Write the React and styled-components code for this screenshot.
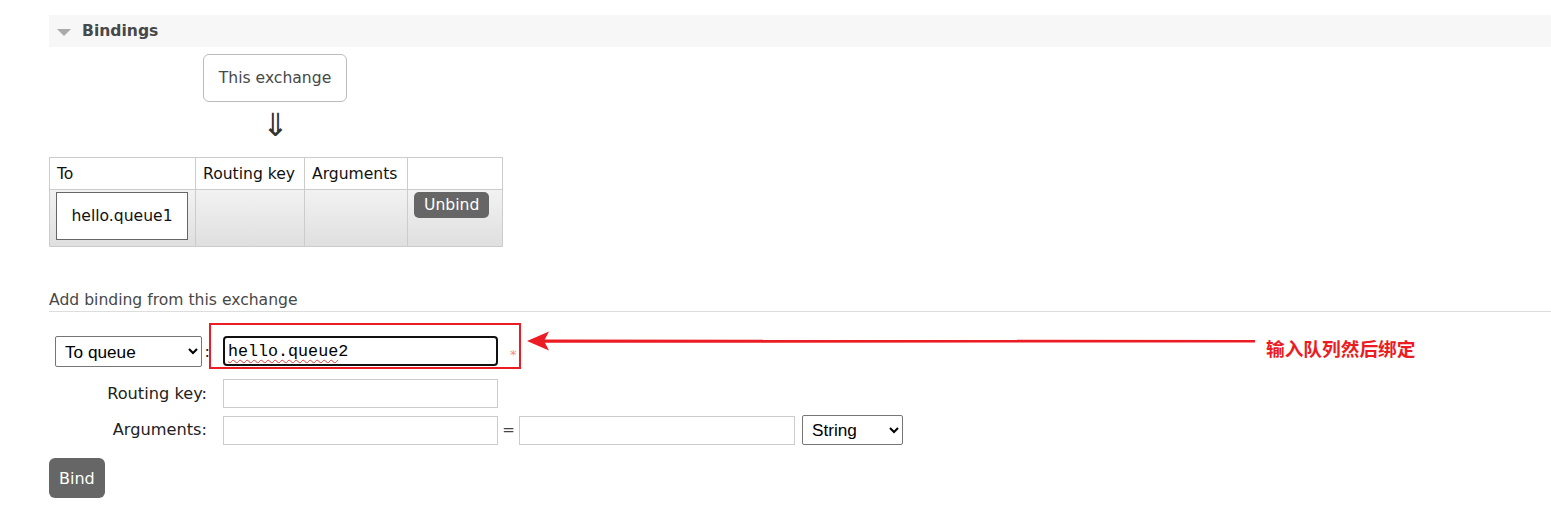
import React from "react";
import styled, { createGlobalStyle } from "styled-components";

const GlobalStyle = createGlobalStyle`
  body {
    margin: 0;
    background: #fff;
    font-family: "DejaVu Sans", Verdana, sans-serif;
    color: #484848;
  }
`;

const Page = styled.div`
  position: relative;
  padding: 15px 0 14px 49px;
`;

const SectionHeader = styled.div`
  height: 32px;
  background: #f7f7f7;
  display: flex;
  align-items: center;
  padding-left: 8px;
  gap: 11px;
`;

const Toggle = styled.span`
  width: 0;
  height: 0;
  border-left: 7px solid transparent;
  border-right: 7px solid transparent;
  border-top: 7px solid #aaa;
  margin-top: 2px;
`;

const HeaderTitle = styled.h2`
  margin: 0;
  font-size: 15.6px;
  font-weight: bold;
  color: #484848;
`;

const Flow = styled.div`
  width: 144px;
  margin-left: 154px;
  padding-top: 7px;
  display: flex;
  flex-direction: column;
  align-items: center;
`;

const ExchangeBox = styled.div`
  box-sizing: border-box;
  width: 144px;
  height: 48px;
  border: 1px solid #bbb;
  border-radius: 6px;
  display: flex;
  align-items: center;
  justify-content: center;
  font-size: 15.6px;
  color: #484848;
`;

const FlowArrow = styled.div`
  height: 55px;
  font-family: "Noto Sans CJK SC", "DejaVu Sans", sans-serif;
  font-weight: 300;
  font-size: 32px;
  line-height: 40px;
  color: #333;
`;

const Table = styled.table`
  border-collapse: collapse;
  table-layout: fixed;
  width: 453px;
  font-size: 15.6px;
  color: #111;

  th, td {
    border: 1px solid #ccc;
    text-align: left;
    vertical-align: top;
  }
  th {
    font-weight: normal;
    height: 31px;
    padding: 0 7px;
    vertical-align: middle;
    white-space: nowrap;
  }
  td {
    height: 54px;
    padding: 2px 6px 0;
  }
`;

const BodyRow = styled.tr`
  background: linear-gradient(#f2f2f2, #dfdfdf);
`;

const QueueLink = styled.div`
  box-sizing: border-box;
  width: 132px;
  height: 48px;
  border: 1px solid #666;
  background: #fff;
  display: flex;
  align-items: center;
  justify-content: center;
  color: #111;
`;

const Button = styled.button`
  border: none;
  background: #666;
  color: #fff;
  font-family: "DejaVu Sans", Verdana, sans-serif;
  font-size: ${(p) => (p.$large ? "16px" : "15.6px")};
  border-radius: ${(p) => (p.$large ? "6px" : "5px")};
  height: ${(p) => (p.$large ? "40px" : "26px")};
  padding: 0 10px;
  cursor: pointer;
`;

const SubHeading = styled.h3`
  margin: 42px 0 0;
  font-size: 15.6px;
  font-weight: normal;
  color: #484848;
  line-height: 22px;
  padding-bottom: 0;
  border-bottom: 1px solid #ddd;
`;

const Form = styled.div`
  padding-top: 24px;
  display: flex;
  flex-direction: column;
`;

const Row = styled.div`
  display: flex;
  align-items: ${(p) => (p.$top ? "flex-start" : "center")};
  margin-top: ${(p) => p.$gap || 0}px;
`;

const LabelCell = styled.label`
  box-sizing: border-box;
  width: 161px;
  padding: ${(p) => (p.$lead ? "0 0 0 6px" : "0 3px 0 0")};
  margin-right: 13px;
  font-size: 16.2px;
  line-height: 20px;
  color: #222;
  display: flex;
  justify-content: ${(p) => (p.$lead ? "flex-start" : "flex-end")};
  align-items: center;
`;

const Select = styled.select`
  box-sizing: border-box;
  width: ${(p) => p.$width}px;
  height: ${(p) => p.$height}px;
  font-family: "Liberation Sans", Arial, sans-serif;
  font-size: 17.2px;
  color: #000;
  border: 1px solid #767676;
  border-radius: 2px;
  background: #fff;
  padding-left: 5px;
`;

const Colon = styled.span`
  margin-left: 3px;
  color: #222;
`;

const TextInput = styled.input`
  box-sizing: border-box;
  width: ${(p) => p.$width || 275}px;
  height: 29px;
  border: 1px solid #ccc;
  background: #fff;
  margin: 0;
`;

const FocusedField = styled.div`
  box-sizing: border-box;
  width: 275px;
  height: 30px;
  border: 2px solid #111;
  border-radius: 4px;
  padding-left: 3px;
  display: flex;
  align-items: center;
  font-family: "Liberation Mono", "Courier New", monospace;
  font-size: 16.7px;
  color: #000;
`;

const Misspelled = styled.span`
  text-decoration: underline wavy #e53935;
  text-decoration-skip-ink: none;
  text-underline-offset: 3px;
  text-decoration-thickness: 1px;
`;

const Required = styled.span`
  margin-left: 12px;
  color: #f28a8a;
  font-size: 13px;
  align-self: center;
  margin-top: 6px;
`;

const Equals = styled.span`
  width: 21px;
  text-align: center;
  color: #444;
  font-size: 15px;
`;

const Spacer = styled.span`
  width: ${(p) => p.$w}px;
`;

const BindRow = styled.div`
  margin-top: 13px;
`;

const RedBox = styled.div`
  position: absolute;
  left: 209px;
  top: 323px;
  width: 312px;
  height: 46px;
  box-sizing: border-box;
  border: 2px solid #ec1c24;
  pointer-events: none;
`;

const ArrowSvg = styled.svg`
  position: absolute;
  left: 525px;
  top: 330px;
`;

const Note = styled.div`
  position: absolute;
  left: 1266px;
  top: 335px;
  font-family: "Noto Sans CJK SC", sans-serif;
  font-weight: bold;
  font-size: 18.7px;
  color: #ec1c24;
  line-height: 26px;
`;

export default function App() {
  return (
    <Page>
      <GlobalStyle />
      <SectionHeader>
        <Toggle />
        <HeaderTitle>Bindings</HeaderTitle>
      </SectionHeader>

      <Flow>
        <ExchangeBox>This exchange</ExchangeBox>
        <FlowArrow>⇓</FlowArrow>
      </Flow>

      <Table>
        <colgroup>
          <col style={{ width: 146 }} />
          <col style={{ width: 109 }} />
          <col style={{ width: 103 }} />
          <col style={{ width: 95 }} />
        </colgroup>
        <thead>
          <tr>
            <th>To</th>
            <th>Routing key</th>
            <th>Arguments</th>
            <th></th>
          </tr>
        </thead>
        <tbody>
          <BodyRow>
            <td>
              <QueueLink>hello.queue1</QueueLink>
            </td>
            <td></td>
            <td></td>
            <td>
              <Button>Unbind</Button>
            </td>
          </BodyRow>
        </tbody>
      </Table>

      <SubHeading>Add binding from this exchange</SubHeading>

      <Form>
        <Row $top>
          <LabelCell as="div" $lead>
            <Select $width={147} $height={31} defaultValue="queue">
              <option value="queue">To queue</option>
              <option value="exchange">To exchange</option>
            </Select>
            <Colon>:</Colon>
          </LabelCell>
          <FocusedField>
            <span>
              <Misspelled>hello.queue</Misspelled>2
            </span>
          </FocusedField>
          <Required>*</Required>
        </Row>

        <Row $gap={12}>
          <LabelCell>Routing key:</LabelCell>
          <TextInput />
        </Row>

        <Row $gap={7}>
          <LabelCell>Arguments:</LabelCell>
          <TextInput />
          <Equals>=</Equals>
          <TextInput $width={276} />
          <Spacer $w={7} />
          <Select $width={101} $height={30} defaultValue="string">
            <option value="string">String</option>
            <option value="number">Number</option>
            <option value="boolean">Boolean</option>
          </Select>
        </Row>

        <BindRow>
          <Button $large>Bind</Button>
        </BindRow>
      </Form>

      <RedBox />
      <ArrowSvg width="734" height="22" viewBox="0 0 734 22">
        <path d="M18 9.6 L730 10 L730 12.4 L18 12.8 Z" fill="#ec1c24" />
        <path d="M2 11 L24 1.5 L19 11 L24 20.5 Z" fill="#ec1c24" />
      </ArrowSvg>
      <Note>输入队列然后绑定</Note>
    </Page>
  );
}
